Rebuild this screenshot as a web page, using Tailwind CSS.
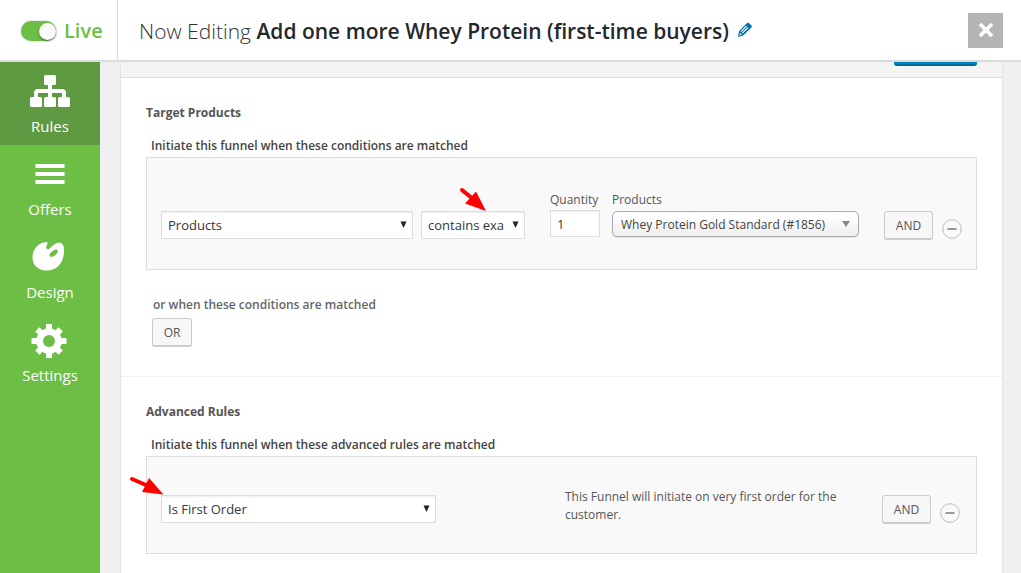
<!DOCTYPE html>
<html lang="en">
<head>
    <meta charset="UTF-8">
    <title>Funnel Rules</title>
    <script src="https://cdn.jsdelivr.net/npm/@tailwindcss/browser@4"></script>
</head>
<body class="h-screen overflow-hidden flex flex-col bg-[#f0f0f0] text-[#555] font-['Open_Sans','Noto_Sans',sans-serif] text-xs">
    <!-- Header -->
    <header class="flex shrink-0 bg-white border-b-2 border-[#ddd]">
        <label class="w-[118px] h-[60px] shrink-0 border-r border-[#ddd] flex items-center gap-2 pl-[21px] pt-[2px] cursor-pointer">
            <input type="checkbox" checked class="peer sr-only">
            <span class="w-[35px] h-5 rounded-full bg-gray-300 peer-checked:bg-[#6dbe45] flex items-center justify-end shadow-[0_0_2px_rgba(0,0,0,0.3)]">
                <span class="w-[17px] h-[17px] rounded-full bg-[#fafafa] shadow-[0_1px_2px_rgba(0,0,0,0.5)]"></span>
            </span>
            <span class="text-[20px] font-semibold text-[#6dbe45]">Live</span>
        </label>
        <div class="flex-1 flex items-center justify-between pl-[21px] pr-[18px]">
            <h1 class="flex items-center pt-[2px] text-[21px] font-light text-[#333] whitespace-nowrap">
                <span>Now Editing <span class="font-semibold text-[#23282d]">Add one more Whey Protein (first-time buyers)</span></span>
                <a href="#" aria-label="Edit name" class="ml-2 pb-[3px]">
                    <svg class="w-4 h-4" viewBox="0 0 16 16">
                        <path fill="#0073aa" fill-rule="evenodd" d="M9.800 1.300 C10.500 .6 11.300 .7 12 1.200 L14.300 3.300 C15 4 15 4.800 14.400 5.500 L6.300 13.500 L1 15 L2 9.300 Z M9 3.700 L3.500 9.400 L4.300 10 L9.900 4.500 Z M10.600 5.200 L5 10.800 L5.800 11.600 L11.400 6 Z M3 11 L2.500 13.400 L4.800 12.800 Z"/>
                    </svg>
                </a>
            </h1>
            <button aria-label="Close" class="w-[35px] h-[35px] bg-[#b4b4b4] flex items-center justify-center">
                <svg class="w-4 h-4" viewBox="0 0 16 16" stroke="#fff" stroke-width="3.600"><path d="M2 2 L14 14 M14 2 L2 14"/></svg>
            </button>
        </div>
    </header>

    <div class="flex-1 flex min-h-0">
        <!-- Sidebar -->
        <nav class="w-[100px] shrink-0 bg-[#6dbe45] text-white text-[15px] leading-5 text-center">
            <a href="#" class="h-[83px] flex flex-col items-center pt-[13px] bg-[#5e9a41]">
                <svg class="w-[42px] h-[34px]" viewBox="0 0 42 34" fill="#fff">
                    <rect x="15" y="0" width="12" height="10" rx="1.500"/>
                    <rect x="1" y="22" width="12" height="10" rx="1.500"/>
                    <rect x="15" y="22" width="12" height="10" rx="1.500"/>
                    <rect x="29" y="22" width="12" height="10" rx="1.500"/>
                    <path d="M7 24 V18 Q7 16 9 16 H33 Q35 16 35 18 V24 M21 8 V24" fill="none" stroke="#fff" stroke-width="4"/>
                </svg>
                <span class="mt-[7px]">Rules</span>
            </a>
            <a href="#" class="h-[83px] flex flex-col items-center pt-[13px]">
                <svg class="w-[42px] h-[34px]" viewBox="0 0 42 34" fill="#fff">
                    <path d="M6.500 6 h29 v4 h-29z M6.500 14 h29 v4 h-29z M6.500 22 h29 v4 h-29z"/>
                </svg>
                <span class="mt-[7px]">Offers</span>
            </a>
            <a href="#" class="h-[83px] flex flex-col items-center pt-[13px]">
                <svg class="w-[42px] h-[34px]" viewBox="0 0 42 34" fill="#fff">
                    <path fill-rule="evenodd" d="M17.500 1 C19.300 1 18.300 3.500 17.300 5.500 C16.500 7.500 18.500 9 20.500 7.500 C23 5.500 25.500 2 29.500 1.700 C34 1.500 35.500 5 35 11 C34.500 22 28 29.500 17.500 29.500 C9 29.500 3.500 24 3.500 16.500 C3.500 8.500 9 1.500 17.500 1 Z M27 8.500 C24 9 20.500 12 20.500 14.500 C21 16.500 24 16 26.500 14 C29 12 30 8.500 27 8.500 Z"/>
                </svg>
                <span class="mt-[7px]">Design</span>
            </a>
            <a href="#" class="h-[83px] flex flex-col items-center pt-[13px]">
                <svg class="w-[42px] h-[34px]" viewBox="0 0 42 34">
                    <g transform="translate(20 17)">
                        <path d="M0 -17.500 V17.500 M-17.500 0 H17.500 M-11.700 -11.700 L11.700 11.700 M11.700 -11.700 L-11.700 11.700" stroke="#fff" stroke-width="6"/>
                        <circle r="12.800" fill="#fff"/>
                        <circle r="6" fill="#6dbe45"/>
                    </g>
                </svg>
                <span class="mt-[7px]">Settings</span>
            </a>
        </nav>

        <!-- Rules panel -->
        <main class="flex-1 min-w-0 ml-5 mr-[18px] bg-white border-x border-[#e5e5e5] shadow-[0_0_2px_rgba(0,0,0,0.05)]">
            <div class="h-4 bg-[#f4f4f4] border-b border-[#ddd] flex items-start justify-end pr-[25px]">
                <button aria-label="Save changes" class="w-[83px] h-1 rounded-b-[3px] bg-[#0085ba] border-b-2 border-[#006799]"></button>
            </div>

            <section class="pt-[25px] px-[25px] pb-[29px] border-b border-[#f0f0f0]">
                <h2 class="leading-5 font-bold">Target Products</h2>
                <h3 class="mt-[13px] pl-[5px] leading-5 font-semibold text-[#444]">Initiate this funnel when these conditions are matched</h3>
                <div class="mt-px border border-[#ddd] bg-[#f9f9f9] pt-8 pb-[29px] px-[14px] flex items-end">
                    <div class="relative flex-1 min-w-0 mb-px">
                        <select aria-label="Rule" class="appearance-none w-full h-7 pt-[2px] pl-[6px] pr-5 bg-white border border-[#ddd] shadow-[inset_0_1px_2px_rgba(0,0,0,0.07)] text-[13px] text-[#32373c]">
                            <option>Products</option>
                        </select>
                        <svg class="absolute right-[6px] top-[10px] w-[7px] h-[7px] pointer-events-none" viewBox="0 0 7 7" fill="#222"><path d="M.5 .5 H6.500 L3.500 7Z"/></svg>
                    </div>
                    <div class="relative w-[104px] shrink-0 ml-2 mb-px">
                        <select aria-label="Operator" class="appearance-none w-full h-7 pt-[2px] pl-[6px] pr-5 bg-white border border-[#ddd] shadow-[inset_0_1px_2px_rgba(0,0,0,0.07)] text-[13px] text-[#32373c]">
                            <option>contains exactly</option>
                        </select>
                        <svg class="absolute right-[6px] top-[10px] w-[7px] h-[7px] pointer-events-none" viewBox="0 0 7 7" fill="#222"><path d="M.5 .5 H6.500 L3.500 7Z"/></svg>
                        <svg class="absolute left-[38px] -top-6 w-7 h-6 pointer-events-none" viewBox="0 0 28 24">
                            <path d="M3 3 L14 12" stroke="#f00" stroke-width="4" stroke-linecap="round"/>
                            <path d="M17 4.500 L27 24 L6 16.500 Z" fill="#f00"/>
                        </svg>
                    </div>
                    <div class="w-[50px] shrink-0 ml-[25px] mb-[3px]">
                        <label for="quantity" class="block leading-5">Quantity</label>
                        <input id="quantity" type="text" value="1" class="block w-full h-[27px] px-[6px] bg-white border border-[#ddd] shadow-[inset_0_1px_2px_rgba(0,0,0,0.07)] text-[13px] text-[#32373c]">
                    </div>
                    <div class="relative w-[247px] shrink-0 ml-3 mb-[3px]">
                        <label for="products" class="block leading-5 mb-px">Products</label>
                        <select id="products" class="appearance-none block w-full h-[26px] pt-[2px] pl-2 pr-5 rounded-[5px] border border-[#aaa] bg-linear-to-b from-white from-20% to-[#eee] shadow-[0_1px_1px_rgba(0,0,0,0.1)] text-xs text-[#444]">
                            <option>Whey Protein Gold Standard (#1856)</option>
                        </select>
                        <svg class="absolute right-[9px] bottom-[10px] w-2 h-[6px] pointer-events-none" viewBox="0 0 8 6" fill="#888"><path d="M0 0 H8 L4 6Z"/></svg>
                    </div>
                    <button class="w-[49px] h-[29px] shrink-0 ml-[25px] pt-[2px] rounded-[3px] bg-[#f7f7f7] border border-b-2 border-[#ccc]">AND</button>
                    <button aria-label="Remove rule" class="shrink-0 ml-[9px] mb-px">
                        <svg class="block w-5 h-5" viewBox="0 0 20 20" fill="none"><circle cx="10" cy="10" r="9.300" stroke="#bbb"/><path d="M5.500 10 H14.500" stroke="#999" stroke-width="2"/></svg>
                    </button>
                </div>
                <h3 class="mt-[25px] pl-[7px] leading-5 font-semibold text-[#666]">or when these conditions are matched</h3>
                <button class="block mt-[3px] ml-[6px] w-10 h-[29px] pt-[2px] rounded-[3px] bg-[#f7f7f7] border border-b-2 border-[#ccc]">OR</button>
            </section>

            <section class="pt-[25px] px-[25px]">
                <h2 class="leading-5 font-bold">Advanced Rules</h2>
                <h3 class="mt-[13px] pl-[5px] leading-5 font-semibold text-[#444]">Initiate this funnel when these advanced rules are matched</h3>
                <div class="mt-px border border-[#ddd] bg-[#f9f9f9] pt-[31px] pb-[29px] pl-[14px] pr-4 flex items-end">
                    <div class="relative flex-1 min-w-0 mb-px">
                        <select aria-label="Advanced rule" class="appearance-none w-full h-7 pt-[2px] pl-[6px] pr-5 bg-white border border-[#ddd] shadow-[inset_0_1px_2px_rgba(0,0,0,0.07)] text-[13px] text-[#32373c]">
                            <option>Is First Order</option>
                        </select>
                        <svg class="absolute right-[6px] top-[10px] w-[7px] h-[7px] pointer-events-none" viewBox="0 0 7 7" fill="#222"><path d="M.5 .5 H6.500 L3.500 7Z"/></svg>
                        <svg class="absolute -left-8 -top-5 w-[35px] h-[20px] pointer-events-none" viewBox="0 0 35 20">
                            <path d="M3 4 L17 10" stroke="#f00" stroke-width="4" stroke-linecap="round"/>
                            <path d="M20 3 L34.500 19.500 L13 17 Z" fill="#f00"/>
                        </svg>
                    </div>
                    <p class="w-[293px] shrink-0 ml-[129px] leading-[18px]">This Funnel will initiate on very first order for the customer.</p>
                    <button class="w-[49px] h-[29px] shrink-0 ml-6 pt-[2px] rounded-[3px] bg-[#f7f7f7] border border-b-2 border-[#ccc]">AND</button>
                    <button aria-label="Remove advanced rule" class="shrink-0 ml-[9px] mb-px">
                        <svg class="block w-5 h-5" viewBox="0 0 20 20" fill="none"><circle cx="10" cy="10" r="9.300" stroke="#bbb"/><path d="M5.500 10 H14.500" stroke="#999" stroke-width="2"/></svg>
                    </button>
                </div>
            </section>
        </main>
    </div>
</body>
</html>
